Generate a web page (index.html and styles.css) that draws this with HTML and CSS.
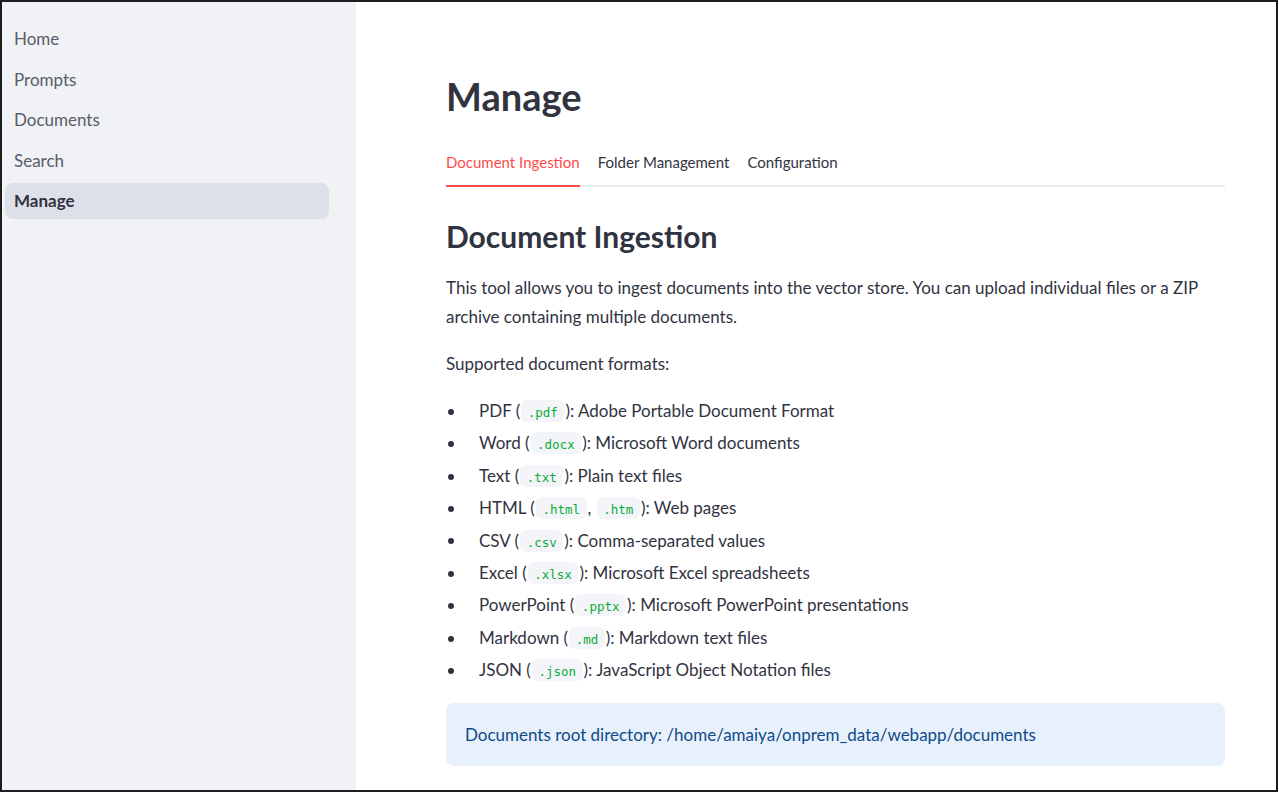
FILE: index.html
```html
<!DOCTYPE html>
<html>
<head>
<meta charset="utf-8">
<link rel="stylesheet" href="styles.css">
</head>
<body>
<div class="frame">
  <aside class="sidebar">
    <nav class="nav">
      <a class="nav-item">Home</a>
      <a class="nav-item">Prompts</a>
      <a class="nav-item">Documents</a>
      <a class="nav-item">Search</a>
      <a class="nav-item active">Manage</a>
    </nav>
  </aside>
  <main class="main">
    <div class="content">
      <h1 class="title">Manage</h1>
      <div class="tabs">
        <span class="tab active">Document Ingestion</span>
        <span class="tab">Folder Management</span>
        <span class="tab">Configuration</span>
      </div>
      <h2 class="heading">Document Ingestion</h2>
      <p class="para">This tool allows you to ingest documents into the vector store. You can upload individual files or a ZIP archive containing multiple documents.</p>
      <p class="para small-gap">Supported document formats:</p>
      <ul class="formats">
        <li>PDF (<code>.pdf</code>): Adobe Portable Document Format</li>
        <li>Word (<code>.docx</code>): Microsoft Word documents</li>
        <li>Text (<code>.txt</code>): Plain text files</li>
        <li>HTML (<code>.html</code>, <code>.htm</code>): Web pages</li>
        <li>CSV (<code>.csv</code>): Comma-separated values</li>
        <li>Excel (<code>.xlsx</code>): Microsoft Excel spreadsheets</li>
        <li>PowerPoint (<code>.pptx</code>): Microsoft PowerPoint presentations</li>
        <li>Markdown (<code>.md</code>): Markdown text files</li>
        <li>JSON (<code>.json</code>): JavaScript Object Notation files</li>
      </ul>
      <div class="info">Documents root directory: /home/amaiya/onprem_data/webapp/documents</div>
    </div>
  </main>
</div>
</body>
</html>
```
FILE: styles.css
```css
* { box-sizing: border-box; }
html, body { margin: 0; padding: 0; background: #ffffff; }
body {
  font-family: "Lato", "Noto Sans", sans-serif;
  color: #31333f;
  width: 1279px;
  height: 793px;
  overflow: hidden;
}
.frame {
  width: 1278px;
  height: 792px;
  border: 2px solid #1d1d1d;
  display: flex;
  overflow: hidden;
}
.sidebar {
  width: 354px;
  flex: 0 0 354px;
  background: #f0f2f6;
  padding: 19px 27px 0 3px;
}
.nav { display: flex; flex-direction: column; gap: 4.5px; }
.nav-item {
  display: block;
  height: 36px;
  line-height: 36px;
  padding-left: 9px;
  font-size: 17px;
  color: #5a5c68;
  border-radius: 8px;
}
.nav-item.active {
  background: #dde0e8;
  color: #31333f;
  font-weight: 700;
}
.main { flex: 1; background: #fff; }
.content { width: 779px; margin-left: 90px; padding-top: 68px; }
.title {
  margin: 0;
  font-size: 38px;
  font-weight: 700;
  line-height: 52px;
  color: #31333f;
}
.tabs {
  margin-top: 25px;
  display: flex;
  gap: 18px;
  border-bottom: 2px solid #ebecef;
}
.tab {
  font-size: 15px;
  line-height: 20px;
  padding: 5px 0 13px;
  color: #31333f;
  margin-bottom: -2px;
  border-bottom: 2px solid transparent;
}
.tab.active { color: #ff4b4b; border-bottom-color: #ff4b4b; }
.heading {
  margin: 31px 0 0;
  font-size: 30px;
  line-height: 36px;
  font-weight: 700;
}
.para {
  margin: 19px 0 0;
  font-size: 17px;
  line-height: 29px;
}
.small-gap { margin-top: 18px; }
.formats {
  list-style: none;
  margin: 17px 0 0;
  padding: 0;
  font-size: 17px;
  line-height: 32.4px;
}
.formats li { padding-left: 33px; }
.formats li::before {
  content: "";
  display: inline-block;
  width: 6px;
  height: 6px;
  border-radius: 50%;
  background: #31333f;
  margin-left: -31px;
  margin-right: 25px;
  vertical-align: middle;
  position: relative;
  top: -1px;
}
code {
  font-family: "DejaVu Sans Mono", "Liberation Mono", monospace;
  font-size: 12.5px;
  line-height: 14px;
  color: #09ab3b;
  background: #f4f5f8;
  padding: 5px 6.5px 2px;
  margin: 0 1px;
  border-radius: 6px;
}
.info {
  margin-top: 16px;
  background: #e8f1fb;
  color: #0d4a8a;
  border-radius: 8px;
  height: 63px;
  display: flex;
  align-items: center;
  padding-left: 19px;
  font-size: 17px;
}
```
